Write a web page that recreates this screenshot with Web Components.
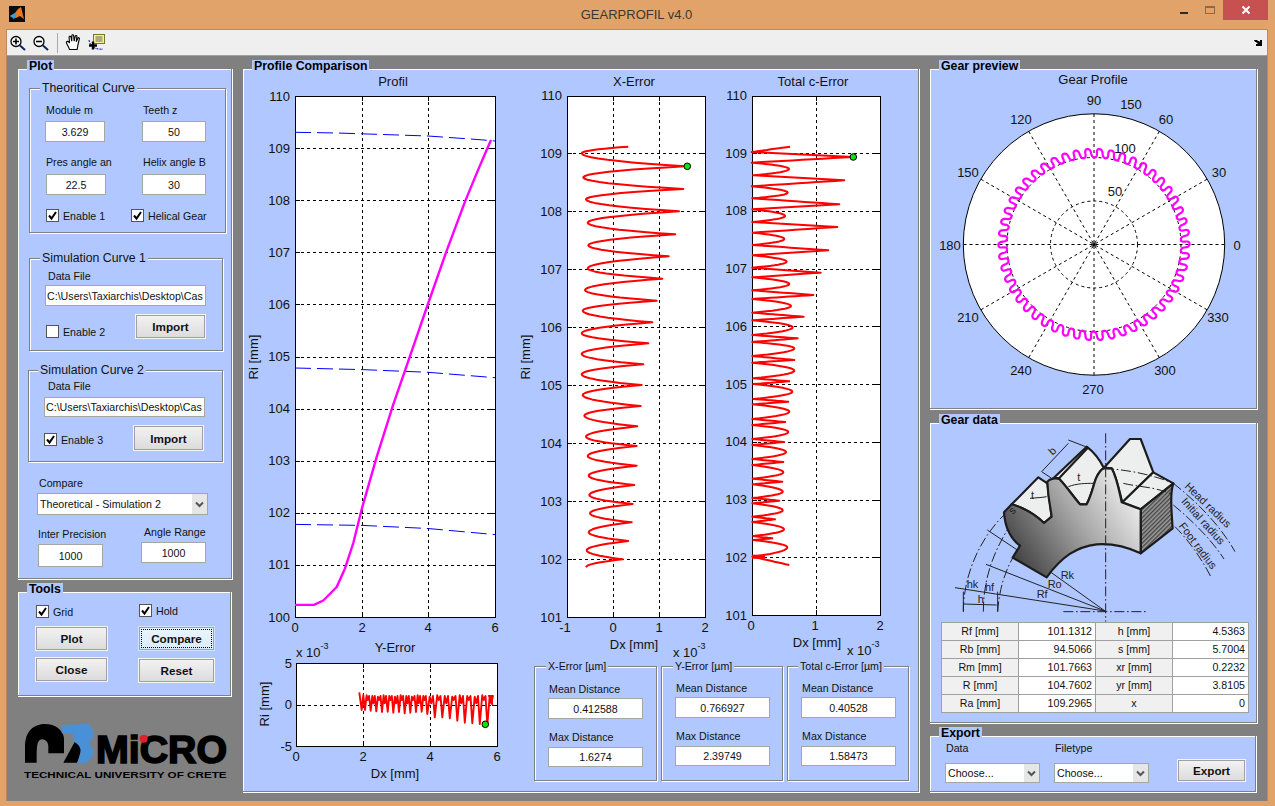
<!DOCTYPE html>
<html lang="en">
<head>
<meta charset="utf-8">
<title>GEARPROFIL v4.0</title>
<style>
  html, body { margin: 0; padding: 0; background: #e2a36a; overflow: hidden; }
</style>
</head>
<body>
<gear-app></gear-app>
<script>
class GearElement extends HTMLElement {
  constructor (...props) {
    super(...props)
    this.attachShadow({mode: 'open'})
  }

  connectedCallback () {
    if (this.rendered) return
    this.rendered = true
    const t = document.createElement('template')
    t.innerHTML = this.template
    this.shadowRoot.appendChild(t.content.cloneNode(true))
  }
}

/* ---------- small controls ---------- */

class GearEdit extends GearElement {
  static get is () { return 'gear-edit' }
  get template () {
    return `
      <style>
        :host {
          display: flex;
          align-items: center;
          justify-content: center;
          box-sizing: border-box;
          background: #fff;
          border: 1px solid #a6a6a6;
          font-size: 10.67px;
          color: #111;
          overflow: hidden;
          white-space: nowrap;
        }
      </style>
      <slot></slot>
    `
  }
}

class GearCheck extends GearElement {
  static get is () { return 'gear-check' }
  get template () {
    const mark = this.hasAttribute('checked')
      ? '<svg width="11" height="11" viewBox="0 0 11 11"><path d="M2 5.5 L4.5 8.5 L9 2" fill="none" stroke="#000" stroke-width="2"/></svg>'
      : ''
    return `
      <style>
        :host { display: flex; align-items: center; gap: 4px; font-size: 10.67px; color: #111; height: 13px; }
        .box {
          box-sizing: border-box;
          width: 13px;
          height: 13px;
          background: #fff;
          border: 1px solid #555;
          flex: none;
        }
        svg { display: block; }
      </style>
      <div class="box">${mark}</div>
      <slot></slot>
    `
  }
}

class GearButton extends GearElement {
  static get is () { return 'gear-button' }
  get template () {
    const focus = this.hasAttribute('focused')
    return `
      <style>
        :host {
          display: flex;
          align-items: center;
          justify-content: center;
          box-sizing: border-box;
          font-size: 11.7px;
          font-weight: bold;
          color: #111;
          background: ${focus ? 'linear-gradient(#eaf5fd, #d9ecfb)' : 'linear-gradient(#f2f2f2, #dcdcdc)'};
          border: 1px solid ${focus ? '#74aee0' : '#a0a0a0'};
          box-shadow: 0 0 0 1px ${focus ? '#cfe6fa' : '#f4f4f4'};
        }
        .label {
          ${focus ? 'outline: 1px dotted #000; outline-offset: 0; padding: 2px 8px 3px; margin: 2px;' : ''}
          ${focus ? 'align-self: stretch; flex: 1; display: flex; align-items: center; justify-content: center;' : ''}
        }
      </style>
      <div class="label"><slot></slot></div>
    `
  }
}

class GearSelect extends GearElement {
  static get is () { return 'gear-select' }
  get template () {
    return `
      <style>
        :host {
          display: flex;
          box-sizing: border-box;
          background: #fff;
          border: 1px solid #a6a6a6;
          font-size: 10.67px;
          color: #111;
        }
        .text { flex: 1; display: flex; align-items: center; padding-left: 2px; white-space: nowrap; overflow: hidden; }
        .arrow { width: 15px; background: #e6e6e6; display: flex; align-items: center; justify-content: center; }
      </style>
      <div class="text"><slot></slot></div>
      <div class="arrow">
        <svg width="9" height="7" viewBox="0 0 9 7"><path d="M1 1.5 L4.5 5 L8 1.5" fill="none" stroke="#555" stroke-width="2"/></svg>
      </div>
    `
  }
}

class GearPanel extends GearElement {
  static get is () { return 'gear-panel' }
  get template () {
    return `
      <style>
        :host {
          display: block;
          position: relative;
          box-sizing: border-box;
          background: #b0c8ff;
          border: 1px solid #808080;
          box-shadow: 1px 1px 0 #fff, inset 1px 1px 0 #fff;
        }
        .title {
          position: absolute;
          top: -9px;
          left: 9px;
          padding: 0 2px;
          background: #b0c8ff;
          font-size: 12.3px;
          line-height: 13px;
          font-weight: bold;
          color: #000;
        }
      </style>
      <div class="title">${this.getAttribute('title') || ''}</div>
      <slot></slot>
    `
  }
}

class GearGroup extends GearElement {
  static get is () { return 'gear-group' }
  get template () {
    const small = this.hasAttribute('small')
    return `
      <style>
        :host {
          display: block;
          position: relative;
          box-sizing: border-box;
          border: 1px solid #808080;
          box-shadow: 1px 1px 0 #fff, inset 1px 1px 0 #fff;
        }
        .title {
          position: absolute;
          top: -8px;
          left: ${this.getAttribute('offset') || 10}px;
          padding: 0 2px;
          background: #b0c8ff;
          font-size: ${small ? '10.67px' : '12.3px'};
          line-height: 14px;
          color: #111;
          white-space: nowrap;
        }
      </style>
      <div class="title">${this.getAttribute('title') || ''}</div>
      <slot></slot>
    `
  }
}

/* ---------- plots ---------- */

// zoomed-in reading of the two error curves, x/3 + 560, y/3 + 90 gives the screen place
const X_ERROR = [
  [205, 170], [65, 190], [375, 229], [70, 262], [370, 297], [78, 328], [357, 364], [83, 398], [346, 433],
  [85, 466], [326, 499], [83, 535], [307, 566], [75, 600], [290, 632], [68, 662], [277, 697], [65, 730],
  [265, 760], [65, 792], [250, 823], [65, 853], [245, 885], [68, 915], [242, 948], [73, 977], [232, 1009],
  [78, 1040], [230, 1068], [83, 1098], [230, 1127], [86, 1157], [223, 1185], [88, 1215], [218, 1242],
  [90, 1270], [215, 1297], [86, 1327], [205, 1353], [80, 1381], [188, 1408], [78, 1432]
]
const C_ERROR = [
  [690, 170], [575, 186], [880, 201], [575, 218], [687, 237], [580, 256], [853, 271], [575, 289], [683, 308],
  [577, 325], [838, 343], [577, 358], [675, 378], [577, 396], [832, 411], [578, 428], [673, 447], [578, 465],
  [805, 481], [578, 496], [680, 515], [577, 533], [782, 548], [577, 562], [688, 582], [577, 601], [760, 615],
  [577, 627], [693, 648], [577, 668], [731, 680], [577, 691], [698, 712], [577, 735], [713, 745], [577, 756],
  [703, 775], [577, 798], [703, 810], [577, 818], [703, 842], [580, 865], [688, 874], [580, 882], [697, 905],
  [580, 927], [685, 935], [578, 943], [688, 965], [577, 987], [676, 996], [577, 1005], [685, 1026], [577, 1047],
  [672, 1056], [577, 1065], [678, 1086], [577, 1107], [670, 1116], [577, 1125], [670, 1147], [578, 1166],
  [667, 1175], [578, 1183], [668, 1205], [577, 1224], [658, 1232], [577, 1240], [668, 1261], [577, 1280],
  [645, 1288], [577, 1296], [672, 1318], [580, 1338], [637, 1345], [580, 1350], [682, 1372], [577, 1400], [688, 1425]
]

const zoomed = ([x, y]) => [560 + x / 3, 90 + y / 3]

// walk the peaks, a round peak leaves and arrives flat, a sharp one is just a corner
function wave (pts, isRound) {
  const out = []
  for (let i = 0; i < pts.length - 1; i++) {
    const [ax, ay] = pts[i]
    const [bx, by] = pts[i + 1]
    const ra = isRound(i)
    const rb = isRound(i + 1)
    const steps = 10
    for (let s = 0; s < steps; s++) {
      const t = s / steps
      let x = ax + (bx - ax) * t
      if (ra && !rb) x = ax + (bx - ax) * t * t
      if (rb && !ra) x = bx + (ax - bx) * (1 - t) * (1 - t)
      out.push([x, ay + (by - ay) * t])
    }
  }
  out.push(pts[pts.length - 1])
  return out
}

function yErrorCurve () {
  const z = ([x, y]) => [250 + x / 3, 610 + y / 3]
  const deep = [300, 302, 304, 306, 305, 308, 306, 310, 308, 306, 305, 312, 322, 322, 325, 332, 338, 340, 342, 345]
  const pts = [[328, 247], [335, 300], [340, 255]]
  let x = 343
  deep.forEach((d, i) => {
    const period = i < 11 ? 17 : 22.5
    pts.push([x + 2, d], [x + period * 0.4, 256 + (i % 3) * 2], [x + period * 0.6, 270 + (i % 2) * 10], [x + period * 0.85, 258])
    x += period
  })
  pts.push([716, 258], [725, 262], [727, 285])
  return pts.map(z)
}

const range = (from, to, count) => Array.from({length: count}, (_, i) => from + (to - from) * i / (count - 1))
const yLabels = (from, top, bottom) => range(top, bottom, from.length).map((y, i) => [y, from[i]])

const PLOTS = {
  profil: {
    box: [243, 69, 272, 571],
    axes: [295, 96, 495, 617],
    title: ['Profil', 393, 85.5],
    ylabel: ['Ri [mm]', 258, 357],
    xt: [[295, '0'], [362, '2'], [428, '4'], [495, '6']],
    xtY: 632,
    yt: yLabels(['110', '109', '108', '107', '106', '105', '104', '103', '102', '101', '100'], 96, 617),
    yr: 290,
    curves: [
      {pts: [[295, 132.3], [337, 133], [428, 136], [480, 139.7], [495, 141]], color: '#0000ff', width: 1, dash: '16 6'},
      {pts: [[295, 368], [362, 369.6], [428, 372.3], [495, 377.7]], color: '#0000ff', width: 1, dash: '16 6'},
      {pts: [[295, 524.4], [362, 525.4], [428, 528.5], [495, 534.6]], color: '#0000ff', width: 1, dash: '16 6'},
      {pts: [[295, 604.9], [314, 604.9], [323.3, 600.5], [336.7, 587], [345, 568.4], [353.3, 543], [361.7, 509.2], [376.7, 456.8], [393.3, 404.4], [405, 370.6], [428.3, 303], [446.7, 250.6], [465, 201.6], [478.3, 169.4], [491, 140]], color: '#ff00ff', width: 2.4}
    ]
  },
  yerror: {
    box: [243, 640, 272, 151],
    axes: [296, 663, 497, 746],
    title: ['Y-Error', 395, 652],
    exp: [296, 657],
    ylabel: ['Ri [mm]', 269, 704],
    xlabel: ['Dx [mm]', 395, 778],
    xt: [[296, '0'], [363, '2'], [430, '4'], [497, '6']],
    xtY: 761,
    yt: [[663, '5'], [704.5, '0'], [746, '-5']],
    yr: 292,
    curves: [{pts: yErrorCurve(), color: '#ff0000', width: 1.9}],
    marker: [485.3, 724.3]
  },
  xerror: {
    box: [515, 69, 197, 593],
    axes: [567, 96, 705, 617],
    title: ['X-Error', 634, 85.5],
    exp: [673, 657],
    ylabel: ['Ri [mm]', 530, 357],
    xlabel: ['Dx [mm]', 634, 649],
    xt: [[567, '-1', 565], [613, '0'], [659, '1'], [705, '2']],
    xtY: 632,
    yt: yLabels(['110', '109', '108', '107', '106', '105', '104', '103', '102', '101'], 95.5, 617),
    yr: 562,
    curves: [{pts: wave(X_ERROR.map(zoomed), i => i % 2 === 1), color: '#ff0000', width: 2}],
    marker: [687.3, 166.3]
  },
  cerror: {
    box: [712, 69, 205, 593],
    axes: [752, 96, 880, 615],
    title: ['Total c-Error', 813, 85.5],
    exp: [847, 655],
    xlabel: ['Dx [mm]', 817, 647],
    xt: [[752, '0', 751], [816, '1', 815], [880, '2']],
    xtY: 630,
    yt: yLabels(['110', '109', '108', '107', '106', '105', '104', '103', '102', '101'], 95.5, 615),
    yr: 747,
    curves: [
      {pts: wave(C_ERROR.map(zoomed), i => i > 0 && i % 4 === 0), color: '#ff0000', width: 2},
      {pts: [[752, 556.7], [765, 556.7]], color: '#ff0000', width: 4}
    ],
    marker: [853.3, 157]
  }
}

class GearPlot extends GearElement {
  static get is () { return 'gear-plot' }
  get template () {
    const p = PLOTS[this.getAttribute('plot')]
    const [bx, by, bw, bh] = p.box
    const [x0, y0, x1, y1] = p.axes
    const path = pts => pts.map(([x, y]) => `${x.toFixed(1)},${y.toFixed(1)}`).join(' ')

    let grid = ''
    let labels = ''
    p.xt.forEach(([x, text, lx]) => {
      const c = Math.round(x) + 0.5
      if (x !== x0 && x !== x1) {
        grid += `<line class="grid" x1="${c}" x2="${c}" y1="${y0}" y2="${y1}"/>`
      }
      grid += `<line class="tick" x1="${c}" x2="${c}" y1="${y0}" y2="${y0 + 5}"/><line class="tick" x1="${c}" x2="${c}" y1="${y1}" y2="${y1 - 5}"/>`
      labels += `<text x="${lx || x}" y="${p.xtY}" text-anchor="middle">${text}</text>`
    })
    p.yt.forEach(([y, text]) => {
      const c = Math.round(y) + 0.5
      if (y > y0 && y < y1) {
        grid += `<line class="grid" x1="${x0}" x2="${x1}" y1="${c}" y2="${c}"/>`
      }
      grid += `<line class="tick" x1="${x0}" x2="${x0 + 5}" y1="${c}" y2="${c}"/><line class="tick" x1="${x1}" x2="${x1 - 5}" y1="${c}" y2="${c}"/>`
      labels += `<text x="${p.yr}" y="${y + 4.5}" text-anchor="end">${text}</text>`
    })
    if (p.title) labels += `<text x="${p.title[1]}" y="${p.title[2]}" text-anchor="middle" font-size="12.5">${p.title[0]}</text>`
    if (p.xlabel) labels += `<text x="${p.xlabel[1]}" y="${p.xlabel[2]}" text-anchor="middle">${p.xlabel[0]}</text>`
    if (p.ylabel) labels += `<text transform="translate(${p.ylabel[1]} ${p.ylabel[2]}) rotate(-90)" text-anchor="middle">${p.ylabel[0]}</text>`
    if (p.exp) labels += `<text x="${p.exp[0]}" y="${p.exp[1]}">x 10<tspan dy="-8" font-size="9">-3</tspan></text>`

    const curves = p.curves.map(c => `<polyline points="${path(c.pts)}" fill="none" stroke="${c.color}" stroke-width="${c.width}" stroke-linejoin="round" ${c.dash ? `stroke-dasharray="${c.dash}"` : ''}/>`).join('')
    const marker = p.marker ? `<circle cx="${p.marker[0]}" cy="${p.marker[1]}" r="3.3" fill="#11e011" stroke="#000" stroke-width="1"/>` : ''

    return `
      <style>
        :host { display: block; width: ${bw}px; height: ${bh}px; }
        svg { display: block; }
        text { font-size: 13px; fill: #111; }
        .grid { stroke: #000; stroke-dasharray: 3 3; shape-rendering: crispEdges; }
        .tick { stroke: #000; shape-rendering: crispEdges; }
        .frame { fill: #fff; stroke: #000; shape-rendering: crispEdges; }
      </style>
      <svg width="${bw}" height="${bh}" viewBox="${bx} ${by} ${bw} ${bh}">
        <rect class="frame" x="${x0 + 0.5}" y="${y0 + 0.5}" width="${x1 - x0}" height="${y1 - y0}"/>
        ${grid}
        ${curves}
        ${marker}
        ${labels}
      </svg>
    `
  }
}

class GearPolar extends GearElement {
  static get is () { return 'gear-polar' }
  get template () {
    const cx = 1094
    const cy = 244.5
    const teeth = 50
    const steps = teeth * 24
    const pts = []
    for (let i = 0; i <= steps; i++) {
      const a = i / steps * Math.PI * 2
      const phase = teeth * a
      // wide round crests and valleys, steep flanks with a small lean
      const b = a + 0.009 * Math.sin(2 * phase) + 0.006 * Math.cos(phase)
      const r = 91.3 + 4.3 * Math.cos(phase)
      pts.push(`${(cx + r * Math.cos(b)).toFixed(1)},${(cy - r * Math.sin(b)).toFixed(1)}`)
    }
    let spokes = ''
    for (let d = 0; d < 180; d += 30) {
      const a = d * Math.PI / 180
      const dx = 130.5 * Math.cos(a)
      const dy = 130.5 * Math.sin(a)
      spokes += `<line x1="${cx - dx}" y1="${cy + dy}" x2="${cx + dx}" y2="${cy - dy}"/>`
    }
    const labels = [
      ['90', 1094, 100], ['60', 1166, 119], ['30', 1219, 172], ['0', 1237, 245], ['330', 1218, 317], ['300', 1165, 370],
      ['270', 1093, 389], ['240', 1021, 370], ['210', 968, 317], ['180', 950, 245], ['150', 968, 172], ['120', 1021, 119],
      ['50', 1115, 191], ['100', 1125, 148], ['150', 1131, 104]
    ].map(([t, x, y]) => `<text x="${x}" y="${y + 4.5}" text-anchor="middle">${t}</text>`).join('')
    return `
      <style>
        :host { display: block; width: 326px; height: 339px; }
        svg { display: block; }
        text { font-size: 13px; fill: #111; }
        .dash { fill: none; stroke: #000; stroke-dasharray: 3 3; }
      </style>
      <svg width="326" height="339" viewBox="930 69 326 339">
        <circle cx="${cx}" cy="${cy}" r="130.7" fill="#fff" stroke="#000" stroke-width="1"/>
        <g class="dash">${spokes}</g>
        <circle class="dash" cx="${cx}" cy="${cy}" r="43.5"/>
        <circle class="dash" cx="${cx}" cy="${cy}" r="87"/>
        <circle cx="${cx}" cy="${cy}" r="1.6" fill="#000"/>
        <polyline points="${pts.join(' ')}" fill="none" stroke="#ff00ff" stroke-width="2.2"/>
        <text x="1093" y="83.5" text-anchor="middle" font-size="12.6">Gear Profile</text>
        ${labels}
      </svg>
    `
  }
}

/* ---------- gear drawing ---------- */

class GearSketch extends GearElement {
  static get is () { return 'gear-sketch' }
  get template () {
    return `
      <style>
        :host { display: block; width: 327px; height: 199px; }
        svg { display: block; }
        text { fill: #222; font-size: 33px; }
        .edge { stroke: #1c1c1c; stroke-width: 6.5; stroke-linejoin: round; }
        .thin { stroke: #222; stroke-width: 3; fill: none; }
        .center { stroke: #222; stroke-width: 3; fill: none; stroke-dasharray: 30 8 5 8; }
      </style>
      <svg width="327" height="199" viewBox="0 24 981 597">
        <defs>
          <linearGradient id="face" gradientUnits="userSpaceOnUse" x1="250" y1="450" x2="610" y2="210">
            <stop offset="0" stop-color="#3c3c3c"/>
            <stop offset="0.55" stop-color="#a8a8a8"/>
            <stop offset="1" stop-color="#f2f2f2"/>
          </linearGradient>
          <pattern id="hatch" width="9" height="9" patternUnits="userSpaceOnUse" patternTransform="rotate(-45)">
            <rect width="9" height="9" fill="#9a9a9a"/>
            <rect width="9" height="4" fill="#444"/>
          </pattern>
        </defs>

        <path class="center" d="M100 590 C100 480 150 370 222 300"/>
        <path class="center" d="M160 590 C160 500 185 420 235 340"/>
        <path class="center" d="M203 590 C208 520 225 470 250 425"/>
        <path class="center" d="M730 205 C800 260 870 330 915 410"/>
        <path class="center" d="M730 270 C790 320 845 375 882 432"/>
        <path class="center" d="M735 335 C775 375 815 430 845 490"/>

        <path class="edge" fill="#edefee" d="M245 268 L325 187 L352 205 L365 305 L342 324 C315 298 280 278 245 268 Z"/>
        <path class="edge" fill="#edefee" d="M370 190 L470 95 C490 110 510 135 522 160 C512 162 505 175 498 190 C490 210 485 240 470 268 L450 268 C430 245 410 215 388 192 C382 188 375 188 370 190 Z"/>
        <path class="edge" fill="#edefee" d="M522 158 L600 72 L632 72 L670 172 L577 262 C568 230 560 185 545 160 Z"/>
        <path class="edge" fill="#edefee" d="M577 262 L670 172 L730 205 L632 283 Z"/>
        <path class="edge" fill="url(#hatch)" d="M632 283 L730 205 C722 230 722 260 728 340 L632 415 Z"/>
        <path class="edge" fill="url(#face)" d="M222 292 L245 268 C280 278 315 298 342 324 L365 305 L355 240 L352 200 C360 190 378 188 388 192 C410 215 430 245 450 268 L470 268 C485 240 490 210 498 190 C505 175 512 162 522 160 L545 160 C560 185 568 230 575 262 L632 283 L632 415 C590 395 545 385 500 388 C440 395 395 425 350 487 L248 428 L270 392 C245 375 225 340 222 292 Z"/>
        <path class="edge" fill="none" d="M385 192 L475 97"/>

        <path class="center" d="M527 55 L527 620"/>
        <path class="center" d="M400 590 L650 590"/>
        <path class="center" d="M522 160 C600 165 670 180 730 205"/>
        <path class="center" d="M580 205 C620 215 670 215 720 235"/>
        <path class="thin" d="M415 215 C440 205 470 205 490 205"/>
        <path class="thin" d="M300 250 C320 248 335 248 350 245"/>
        <path class="thin" d="M335 170 L415 85 M415 75 L472 97 M335 170 L365 190"/>
        <path class="thin" d="M525 588 L360 470 M525 588 L168 448 M525 588 L75 518"/>
        <path class="thin" d="M172 345 L262 405"/>
        <path class="thin" d="M100 567 L200 570 M100 590 L100 530 M203 590 L203 530"/>

        <text x="392" y="492">Rk</text>
        <text x="353" y="518">Ro</text>
        <text x="320" y="549">Rf</text>
        <text x="110" y="519">hk</text>
        <text x="165" y="527">hf</text>
        <text x="143" y="563">h</text>
        <text x="442" y="199">t</text>
        <text x="303" y="252">t</text>
        <text transform="translate(248 300) rotate(-45)" font-size="28">s</text>
        <text transform="translate(368 122) rotate(-45)">b</text>
        <text transform="translate(762 216) rotate(44)" font-size="35">Head radius</text>
        <text transform="translate(752 260) rotate(48)" font-size="35">Initial radius</text>
        <text transform="translate(745 333) rotate(53)" font-size="35">Foot radius</text>
      </svg>
    `
  }
}

class GearTable extends GearElement {
  static get is () { return 'gear-table' }
  get template () {
    const rows = [
      ['Rf [mm]', '101.1312', 'h [mm]', '4.5363'],
      ['Rb [mm]', '94.5066', 's [mm]', '5.7004'],
      ['Rm [mm]', '101.7663', 'xr [mm]', '0.2232'],
      ['R [mm]', '104.7602', 'yr [mm]', '3.8105'],
      ['Ra [mm]', '109.2965', 'x', '0']
    ]
    const cells = rows.map(r => r.map((c, i) => `<div class="${i % 2 ? 'val' : 'key'}">${c}</div>`).join('')).join('')
    return `
      <style>
        :host {
          display: grid;
          grid-template-columns: 77px 77px 77px 76px;
          grid-auto-rows: 18px;
          font-size: 10.67px;
          color: #111;
          border-top: 1px solid #a0a0a0;
          border-left: 1px solid #a0a0a0;
          width: max-content;
        }
        div { box-sizing: border-box; border-right: 1px solid #a0a0a0; border-bottom: 1px solid #a0a0a0; line-height: 17px; white-space: nowrap; }
        .key { background: #f0f0f0; text-align: center; }
        .val { background: #fff; text-align: right; padding-right: 3px; }
      </style>
      ${cells}
    `
  }
}

/* ---------- window chrome ---------- */

class GearToolbar extends GearElement {
  static get is () { return 'gear-toolbar' }
  get template () {
    const lens = inner => `
      <svg width="16" height="16" viewBox="0 0 16 16">
        <circle cx="6" cy="6.5" r="5" fill="#fff" stroke="#000" stroke-width="1.3"/>
        <path d="${inner}" stroke="#000" stroke-width="1.6"/>
        <path d="M10 10.5 L15 15" stroke="#0a246a" stroke-width="2"/>
      </svg>`
    return `
      <style>
        :host {
          display: flex;
          align-items: center;
          box-sizing: border-box;
          height: 26px;
          background: #efefef;
          border-bottom: 1px solid #a0a0a0;
          padding: 0 5px 0 3px;
        }
        svg { display: block; flex: none; }
        .sep { width: 1px; height: 20px; background: #a8a8a8; margin: 0 7px 0 8px; flex: none; }
        .fill { flex: 1; }
        .a { margin-right: 7px; }
        .b { margin-right: 6px; }
      </style>
      <div class="a">${lens('M3 6.5 H9 M6 3.5 V9.5')}</div>
      <div>${lens('M3 6.5 H9')}</div>
      <div class="sep"></div>
      <svg class="b" width="17" height="17" viewBox="0 0 16 17">
        <path d="M4 15.5 C3 12.5 .8 9.5 .8 8.3 C.8 7 3 7 4 9 L3.6 3.2 C3.6 2 5.3 2 5.6 3.2 L6.2 7.2 L6.4 1.6 C6.4 .5 8 .5 8.2 1.6 L8.6 7.2 L9.8 2.2 C10 1.2 11.6 1.4 11.4 2.5 L10.7 7.8 L12.4 4.2 C12.9 3.2 14.2 3.6 13.9 4.8 L12.6 10 C12.1 12 12.1 14 11.6 15.5 Z" fill="#fff" stroke="#000" stroke-width="1.1"/>
      </svg>
      <svg width="17" height="17" viewBox="0 0 17 17">
        <rect x="5.5" y=".5" width="11" height="9" fill="#f4f0a0" stroke="#77771c"/>
        <path d="M7.5 3 H14.5 M7.5 5 H14.5 M7.5 7 H14.5" stroke="#444" stroke-width=".8"/>
        <path d="M1 6 C1.5 10 4 13 8 14.5 C10 15 13 15.5 15 15" fill="none" stroke="#0000c0" stroke-dasharray="2 1"/>
        <path d="M1 11.5 H9 M5 7.5 V15.5" stroke="#000" stroke-width="2.4"/>
      </svg>
      <div class="fill"></div>
      <svg width="8" height="6" viewBox="0 0 8 6"><path d="M0 0 H3 L4 1 H5 L6 2 V0 H8 V6 H2 V4 H4 L2 2 H1 Z" fill="#000"/></svg>
    `
  }
}

class GearWindow extends GearElement {
  static get is () { return 'gear-window' }
  get template () {
    return `
      <style>
        :host {
          display: flex;
          flex-direction: column;
          box-sizing: border-box;
          width: 1275px;
          height: 806px;
          background: #e2a36a;
          padding-bottom: 5px;
        }
        .bar {
          display: grid;
          grid-template-columns: 1fr auto 1fr;
          height: 29px;
          flex: none;
        }
        .icon { margin: 6px 0 0 9px; display: block; }
        .name { font-size: 13px; color: #3d3630; line-height: 30px; margin-left: -2px; }
        .caption { display: flex; justify-content: flex-end; align-items: flex-start; padding-right: 7px; }
        .min { width: 8px; height: 2px; background: #2a2a2a; margin: 12px 17px 0 0; }
        .max { box-sizing: border-box; width: 10px; height: 8px; border: 1px solid #8a6a48; border-top-width: 2px; margin: 6px 8px 0 0; }
        .close { width: 45px; height: 20px; background: #c75050; display: flex; align-items: center; justify-content: center; }
        .client {
          flex: 1;
          display: flex;
          flex-direction: column;
          margin: 0 7px 0 6px;
          border: solid #b98a5e;
          border-width: 1px 1px 0 1px;
          background: #808080;
          min-height: 0;
        }
      </style>
      <div class="bar">
        <svg class="icon" width="16" height="16" viewBox="0 0 16 16">
          <rect width="16" height="16" fill="#0c0c0c"/>
          <path d="M1 10 L6 7 L9 3 L12 1 L15 13 L11 10 L7 12 Z" fill="#e8791e"/>
          <path d="M1 10 L6 7 L8 9 L5 13 Z" fill="#3a9bd8"/>
        </svg>
        <div class="name">GEARPROFIL v4.0</div>
        <div class="caption">
          <div class="min"></div>
          <div class="max"></div>
          <div class="close">
            <svg width="10" height="10" viewBox="0 0 10 10"><path d="M1.5 1.5 L8.5 8.5 M8.5 1.5 L1.5 8.5" stroke="#fff" stroke-width="2"/></svg>
          </div>
        </div>
      </div>
      <div class="client"><slot></slot></div>
    `
  }
}

/* ---------- panels ---------- */

class GearPlotPanel extends GearElement {
  static get is () { return 'gear-plot-panel' }
  get template () {
    return `
      <style>
        :host { display: block; }
        gear-panel { height: 511px; }
        label, .label { display: block; font-size: 10.67px; line-height: 14px; color: #111; white-space: nowrap; }
        gear-edit { height: 21px; }
        .theory { margin: 19px 0 0 11px; width: 197px; height: 145px; padding: 14px 0 0 15px; }
        .fields { display: grid; grid-template-columns: 97px 64px; row-gap: 13px; }
        .fields .label { margin: 0 0 4px 1px; }
        .fields .lower .label { margin-bottom: 5px; }
        .m { width: 60px; }
        .t { width: 64px; }
        .pres { margin-left: 1px; }
        .checks { display: grid; grid-template-columns: 85px auto; margin: 14px 0 0 1px; }
        .sim1 { margin: 25px 0 0 11px; width: 194px; height: 93px; padding: 10px 0 0 15px; }
        .sim2 { margin: 19px 0 0 10px; width: 195px; height: 92px; padding: 8px 0 0 15px; }
        .data-label { margin: 0 0 2px 3px; }
        .sim2 .data-label { margin: 0 0 4px 4px; }
        .path { width: 161px; justify-content: flex-start; padding-left: 1px; }
        .sim2 .path { height: 20px; }
        .row { display: grid; grid-template-columns: 91px 69px; margin-top: 9px; }
        .row gear-check { align-self: end; margin-left: 1px; }
        .row gear-button { height: 23px; }
        .sim2 .row { grid-template-columns: 90px 69px; }
        .sim2 .row gear-check { margin: 0 0 4px 0; }
        .sim2 .row gear-button { height: 24px; }
        .compare { margin: 14px 0 0 21px; }
        gear-select { width: 171px; height: 22px; margin: 3px 0 0 -2px; }
        .bottom { display: grid; grid-template-columns: 103px 65px; margin: 12px 0 0 20px; }
        .bottom gear-edit { width: 65px; margin-top: 3px; }
        .bottom .prec { height: 23px; }
        .bottom .angle-label { margin: -2px 0 2px 3px; }
      </style>
      <gear-panel title="Plot">
        <gear-group class="theory" title="Theoritical Curve">
          <div class="fields">
            <div><div class="label">Module m</div><gear-edit class="m">3.629</gear-edit></div>
            <div><div class="label">Teeth z</div><gear-edit class="t">50</gear-edit></div>
            <div class="lower"><div class="label">Pres angle an</div><gear-edit class="m pres">22.5</gear-edit></div>
            <div class="lower"><div class="label">Helix angle B</div><gear-edit class="t">30</gear-edit></div>
          </div>
          <div class="checks">
            <gear-check checked>Enable 1</gear-check>
            <gear-check checked>Helical Gear</gear-check>
          </div>
        </gear-group>
        <gear-group class="sim1" title="Simulation Curve 1">
          <div class="label data-label">Data File</div>
          <gear-edit class="path">C:\\Users\\Taxiarchis\\Desktop\\Cas</gear-edit>
          <div class="row">
            <gear-check>Enable 2</gear-check>
            <gear-button>Import</gear-button>
          </div>
        </gear-group>
        <gear-group class="sim2" title="Simulation Curve 2" offset="9">
          <div class="label data-label">Data File</div>
          <gear-edit class="path">C:\\Users\\Taxiarchis\\Desktop\\Cas</gear-edit>
          <div class="row">
            <gear-check checked>Enable 3</gear-check>
            <gear-button>Import</gear-button>
          </div>
        </gear-group>
        <div class="compare">
          <div class="label">Compare</div>
          <gear-select>Theoretical - Simulation 2</gear-select>
        </div>
        <div class="bottom">
          <div><div class="label">Inter Precision</div><gear-edit class="prec">1000</gear-edit></div>
          <div><div class="label angle-label">Angle Range</div><gear-edit>1000</gear-edit></div>
        </div>
      </gear-panel>
    `
  }
}

class GearToolsPanel extends GearElement {
  static get is () { return 'gear-tools-panel' }
  get template () {
    return `
      <style>
        :host { display: block; }
        gear-panel { height: 105px; width: 214px; }
        .grid {
          display: grid;
          grid-template-columns: 71px 75px;
          column-gap: 32px;
          padding: 13px 0 0 18px;
        }
        gear-button { height: 23px; }
        .hold { margin-top: -1px; }
        .top { margin-top: 9px; }
        .under { margin-top: 8px; }
        .reset { margin-top: 9px; }
      </style>
      <gear-panel title="Tools">
        <div class="grid">
          <gear-check checked>Grid</gear-check>
          <gear-check class="hold" checked>Hold</gear-check>
          <gear-button class="top">Plot</gear-button>
          <gear-button class="top" focused>Compare</gear-button>
          <gear-button class="under">Close</gear-button>
          <gear-button class="reset">Reset</gear-button>
        </div>
      </gear-panel>
    `
  }
}

class GearLogo extends GearElement {
  static get is () { return 'gear-logo' }
  get template () {
    return `
      <style>
        :host { display: block; width: 205px; height: 60px; margin-left: 6px; }
        svg { display: block; }
        text { font-family: "Liberation Sans", sans-serif; font-weight: bold; fill: #000; }
      </style>
      <svg width="205" height="60" viewBox="69 459 615 180">
        <path d="M75 578 L75 530 C75 480 105 462 135 462 C165 462 190 480 192 505 L192 550 L145 550 L145 530 C145 510 125 500 115 515 C110 525 110 540 110 578 Z" fill="#000"/>
        <path d="M230 505 L252 510 L232 578 L190 578 Z" fill="#000"/>
        <path d="M185 465 L265 462 C285 480 288 505 265 520 C288 535 285 565 255 580 L230 580 C245 555 250 530 222 515 L218 490 L240 490 L185 490 Z" fill="#4a90d6"/>
        <text x="288" y="578" font-size="118" stroke="#000" stroke-width="5">MiCRO</text>
        <circle cx="431" cy="506" r="12" fill="#e0202a"/>
        <text x="72" y="624" font-size="29" textLength="608" lengthAdjust="spacingAndGlyphs">TECHNICAL UNIVERSITY OF CRETE</text>
      </svg>
    `
  }
}

class GearStats extends GearElement {
  static get is () { return 'gear-stats' }
  get template () {
    const shift = this.hasAttribute('raised')
    return `
      <style>
        :host { display: block; }
        gear-group { height: 115px; padding: ${shift ? 14 : 15}px 0 0 13px; }
        .label { font-size: 10.67px; line-height: 14px; color: #111; margin-left: 1px; white-space: nowrap; }
        gear-edit { width: 95px; height: 21px; margin-top: 2px; }
        .max { margin-top: 11px; }
        .maxv { height: 20px; margin-top: 3px; }
      </style>
      <gear-group small title="${this.getAttribute('title')}" offset="${this.getAttribute('offset') || 11}">
        <div class="label">Mean Distance</div>
        <gear-edit>${this.getAttribute('mean')}</gear-edit>
        <div class="label max">Max Distance</div>
        <gear-edit class="maxv">${this.getAttribute('max')}</gear-edit>
      </gear-group>
    `
  }
}

class GearComparePanel extends GearElement {
  static get is () { return 'gear-compare-panel' }
  get template () {
    return `
      <style>
        :host { display: block; }
        gear-panel { height: 724px; }
        .layout { display: grid; grid-template-columns: 272px 402px; }
        .right { display: flex; flex-wrap: wrap; align-content: flex-start; }
        .stats { display: grid; grid-template-columns: 123px 122px 122px; column-gap: 4px; margin: 4px 0 0 19px; }
      </style>
      <gear-panel title="Profile Comparison">
        <div class="layout">
          <div>
            <gear-plot plot="profil"></gear-plot>
            <gear-plot plot="yerror"></gear-plot>
          </div>
          <div class="right">
            <gear-plot plot="xerror"></gear-plot>
            <gear-plot plot="cerror"></gear-plot>
            <div class="stats">
              <gear-stats title="X-Error [µm]" mean="0.412588" max="1.6274"></gear-stats>
              <gear-stats title="Y-Error [µm]" mean="0.766927" max="2.39749" raised></gear-stats>
              <gear-stats title="Total c-Error [µm]" mean="0.40528" max="1.58473" offset="10" raised></gear-stats>
            </div>
          </div>
        </div>
      </gear-panel>
    `
  }
}

class GearSidePanels extends GearElement {
  static get is () { return 'gear-side-panels' }
  get template () {
    return `
      <style>
        :host { display: flex; flex-direction: column; width: 328px; }
        .preview { height: 341px; }
        .data { height: 301px; margin-top: 13px; }
        .data gear-table { margin: 199px 0 0 11px; }
        gear-sketch { position: absolute; left: 0; top: 0; }
        .export { height: 57px; margin-top: 12px; width: 327px; }
        .export .row { display: flex; padding: 5px 0 0 15px; }
        .export .col { width: 109px; }
        .export .label { font-size: 10.67px; line-height: 14px; color: #111; margin-left: 1px; }
        .export gear-select { width: 95px; height: 20px; margin-top: 8px; }
        .export gear-button { width: 67px; height: 21px; margin: 19px 0 0 15px; }
      </style>
      <gear-panel class="preview" title="Gear preview">
        <gear-polar></gear-polar>
      </gear-panel>
      <gear-panel class="data" title="Gear data">
        <gear-sketch></gear-sketch>
        <gear-table></gear-table>
      </gear-panel>
      <gear-panel class="export" title="Export">
        <div class="row">
          <div class="col"><div class="label">Data</div><gear-select>Choose...</gear-select></div>
          <div class="col"><div class="label">Filetype</div><gear-select>Choose...</gear-select></div>
          <gear-button>Export</gear-button>
        </div>
      </gear-panel>
    `
  }
}

class GearApp extends GearElement {
  static get is () { return 'gear-app' }
  get template () {
    return `
      <style>
        :host { display: block; font-family: "Liberation Sans", Arial, sans-serif; }
        .main {
          display: grid;
          grid-template-columns: 215px 677px 328px;
          column-gap: 10px;
          padding: 12px 0 0 10px;
        }
        .left { display: flex; flex-direction: column; gap: 12px; }
        gear-logo { margin-top: 15px; }
      </style>
      <gear-window>
        <gear-toolbar></gear-toolbar>
        <div class="main">
          <div class="left">
            <gear-plot-panel></gear-plot-panel>
            <gear-tools-panel></gear-tools-panel>
            <gear-logo></gear-logo>
          </div>
          <gear-compare-panel></gear-compare-panel>
          <gear-side-panels></gear-side-panels>
        </div>
      </gear-window>
    `
  }
}

const elements = [
  GearEdit, GearCheck, GearButton, GearSelect, GearPanel, GearGroup, GearPlot, GearPolar, GearSketch, GearTable,
  GearToolbar, GearWindow, GearPlotPanel, GearToolsPanel, GearLogo, GearStats, GearComparePanel, GearSidePanels, GearApp
]
elements.forEach(e => customElements.define(e.is, e))
</script>
</body>
</html>
